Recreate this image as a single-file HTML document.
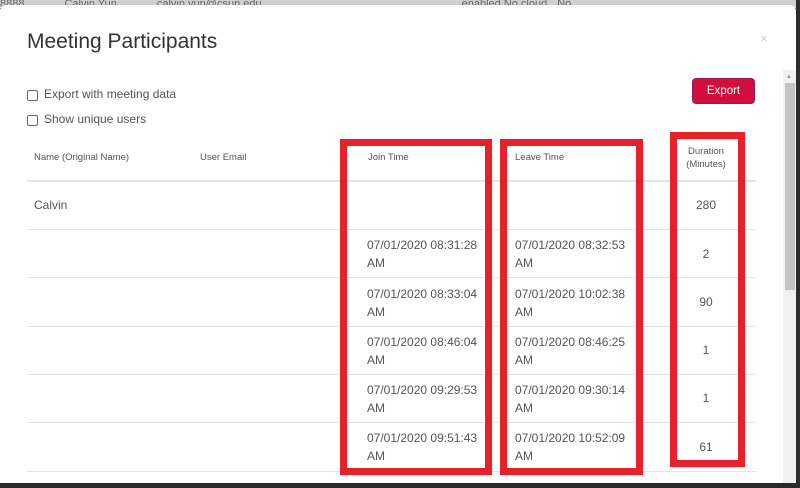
<!DOCTYPE html>
<html><head><style>
*{margin:0;padding:0;box-sizing:border-box}
body{width:800px;height:488px;overflow:hidden;background:#2e2e2e;font-family:"Liberation Sans",sans-serif;position:relative;color:#444}
.a{position:absolute}
.top{left:0;top:0;width:796px;height:8px;background:#d0d0d0;font-size:11px;color:#666;line-height:8px;overflow:hidden}
.modal{left:0;top:5px;width:796px;height:478px;background:#fff;border-radius:6px 6px 0 0}
.sb{left:783px;top:70px;width:13px;height:413px;background:#f0eff2}
.thumb{left:785px;top:83px;width:10px;height:207px;background:#c4c4c4}
.line{left:27px;width:729px;height:1px;background:#e4e4e4}
.t{font-size:12px;color:#555}
.h{font-size:9.5px;color:#555}
.box{border:7px solid #e8202a}
.cb{width:11px;height:11px;border:1px solid #666;border-radius:2px}
</style></head><body>
<div class="a top"><span>8888</span><span style="margin-left:40px">Calvin Yun</span><span style="margin-left:40px">calvin.yun@csun.edu</span><span style="margin-left:200px">enabled No cloud</span><span style="margin-left:10px">No</span></div>
<div class="a modal"></div>
<div class="a sb"></div><div class="a thumb"></div>
<div class="a" style="left:786px;top:74px;font-size:6px;color:#999">▲</div>
<div class="a" style="left:27px;top:30px;font-size:21px;color:#333">Meeting Participants</div>
<div class="a" style="left:760px;top:31px;font-size:13px;color:#ccc">×</div>
<div class="a" style="left:692px;top:78px;width:63px;height:26px;background:#d0103a;border:1px solid #9a1a5a;border-radius:4px;color:#fff;font-size:11.5px;text-align:center;line-height:24px">Export</div>
<div class="a cb" style="left:27px;top:90px"></div><div class="a t" style="left:44px;top:87px">Export with meeting data</div>
<div class="a cb" style="left:27px;top:115px"></div><div class="a t" style="left:44px;top:112px">Show unique users</div>
<div class="a h" style="left:34px;top:152px">Name (Original Name)</div>
<div class="a h" style="left:200px;top:152px">User Email</div>
<div class="a h" style="left:368px;top:152px">Join Time</div>
<div class="a h" style="left:515px;top:152px">Leave Time</div>
<div class="a h" style="left:680px;top:145px;width:52px;text-align:center;line-height:13px">Duration (Minutes)</div>
<div class="a line" style="top:180px;height:2px"></div>
<div class="a line" style="top:229px"></div>
<div class="a line" style="top:277px"></div>
<div class="a line" style="top:326px"></div>
<div class="a line" style="top:374px"></div>
<div class="a line" style="top:422px"></div>
<div class="a line" style="top:471px"></div>
<div class="a t" style="left:34px;top:198px">Calvin</div>
<div class="a t" style="left:680px;top:198px;width:52px;text-align:center">280</div>
<div class="a t" style="left:367px;top:236px;line-height:18px">07/01/2020 08:31:28<br>AM</div>
<div class="a t" style="left:515px;top:236px;line-height:18px">07/01/2020 08:32:53<br>AM</div>
<div class="a t" style="left:680px;top:247px;width:52px;text-align:center">2</div>
<div class="a t" style="left:367px;top:285px;line-height:18px">07/01/2020 08:33:04<br>AM</div>
<div class="a t" style="left:515px;top:285px;line-height:18px">07/01/2020 10:02:38<br>AM</div>
<div class="a t" style="left:680px;top:295px;width:52px;text-align:center">90</div>
<div class="a t" style="left:367px;top:333px;line-height:18px">07/01/2020 08:46:04<br>AM</div>
<div class="a t" style="left:515px;top:333px;line-height:18px">07/01/2020 08:46:25<br>AM</div>
<div class="a t" style="left:680px;top:343px;width:52px;text-align:center">1</div>
<div class="a t" style="left:367px;top:381px;line-height:18px">07/01/2020 09:29:53<br>AM</div>
<div class="a t" style="left:515px;top:381px;line-height:18px">07/01/2020 09:30:14<br>AM</div>
<div class="a t" style="left:680px;top:391px;width:52px;text-align:center">1</div>
<div class="a t" style="left:367px;top:429px;line-height:18px">07/01/2020 09:51:43<br>AM</div>
<div class="a t" style="left:515px;top:429px;line-height:18px">07/01/2020 10:52:09<br>AM</div>
<div class="a t" style="left:680px;top:440px;width:52px;text-align:center">61</div>
<div class="a box" style="left:340px;top:139px;width:152px;height:336px"></div>
<div class="a box" style="left:500px;top:139px;width:143px;height:336px"></div>
<div class="a box" style="left:670px;top:132px;width:75px;height:335px"></div>
<div class="a" style="left:0;top:483px;width:800px;height:5px;background:#2a2a2a"></div>
</body></html>
